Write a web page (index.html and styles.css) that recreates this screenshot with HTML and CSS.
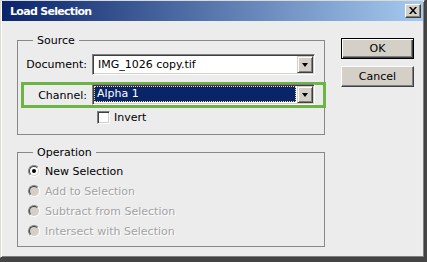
FILE: index.html
```html
<!DOCTYPE html>
<html>
<head>
<meta charset="utf-8">
<link rel="stylesheet" href="styles.css">
</head>
<body>
<div class="window">
  <div class="titlebar">
    <span class="title">Load Selection</span>
    <span class="close"><svg width="8" height="7" viewBox="0 0 8 7"><path d="M0 0h2l2 2.5L6 0h2L5 3.5 8 7H6L4 4.5 2 7H0l3-3.5z" fill="#000"/></svg></span>
  </div>
  <div class="content">
    <div class="groups">
      <fieldset class="group source">
        <legend>Source</legend>
        <div class="row doc">
          <span class="lbl">Document:</span>
          <div class="combo"><span class="val">IMG_1026 copy.tif</span><span class="drop"><span class="arrow"></span></span></div>
        </div>
        <div class="row chan">
          <span class="lbl">Channel:</span>
          <div class="combo"><span class="val selected">Alpha 1</span><span class="drop"><span class="arrow"></span></span></div>
        </div>
        <div class="check-row"><span class="checkbox"></span><span>Invert</span></div>
      </fieldset>
      <fieldset class="group operation">
        <legend>Operation</legend>
        <div class="radio-row"><span class="radio checked"></span><span>New Selection</span></div>
        <div class="radio-row disabled"><span class="radio"></span><span>Add to Selection</span></div>
        <div class="radio-row disabled"><span class="radio"></span><span>Subtract from Selection</span></div>
        <div class="radio-row disabled"><span class="radio"></span><span>Intersect with Selection</span></div>
      </fieldset>
    </div>
    <div class="buttons">
      <button class="btn default">OK</button>
      <button class="btn">Cancel</button>
    </div>
  </div>
</div>
</body>
</html>
```
FILE: styles.css
```css
html, body {
  margin: 0;
  padding: 0;
}
body {
  background: #454545;
  width: 427px;
  height: 262px;
  overflow: hidden;
  font-family: "DejaVu Sans", sans-serif;
  font-size: 11px;
  color: #000;
}
.window {
  box-sizing: border-box;
  width: 425px;
  height: 258px;
  background: #ECECEC;
  border: 1px solid;
  border-color: #DCDAD5 #404040 #404040 #DCDAD5;
  box-shadow: inset 1px 1px #fff, inset -1px -1px #808080;
  padding: 0 1px 1px 1px;
}
.titlebar {
  height: 20px;
  display: flex;
  align-items: center;
  justify-content: space-between;
  background: linear-gradient(to right, #0A246A, #A6CAF0);
  padding: 0 2px 0 8px;
}
.title {
  color: #fff;
  font-weight: bold;
  font-size: 11px;
  letter-spacing: -0.7px;
}
.close {
  box-sizing: border-box;
  width: 16px;
  height: 14px;
  background: #D4D0C8;
  border: 1px solid;
  border-color: #fff #404040 #404040 #fff;
  box-shadow: inset -1px -1px #808080;
  display: flex;
  align-items: center;
  justify-content: center;
  padding: 0 1px 1px 0;
}
.close svg { display: block; }
.content {
  display: flex;
  padding: 13px 0 0 15px;
  gap: 16px;
}
.groups {
  width: 308px;
  display: flex;
  flex-direction: column;
  gap: 11px;
}
.group {
  margin: 0;
  padding: 0;
  border: 1px solid #888;
  min-width: 0;
}
.group legend {
  margin-left: 15px;
  padding: 0 4px;
  line-height: 13px;
}
.source { padding: 7px 0 10px 0; }
.row {
  display: flex;
  align-items: center;
  gap: 5px;
}
.lbl {
  text-align: right;
}
.doc .lbl { width: 69px; }
.chan {
  margin: 7px -2px 0 3px;
  border: 3px solid #6CB444;
  height: 20px;
}
.chan .lbl { width: 63px; }
.combo {
  box-sizing: border-box;
  width: 223px;
  height: 21px;
  background: #fff;
  border: 1px solid;
  border-color: #808080 #fff #fff #808080;
  box-shadow: inset 1px 1px #404040, inset -1px -1px #D4D0C8;
  display: flex;
  padding: 1px;
}
.chan .combo { height: 21px; margin-top: -1px; }
.val {
  flex: 1;
  padding-left: 4px;
  line-height: 17px;
  white-space: nowrap;
}
.val.selected {
  background: #0A246A;
  color: #fff;
  outline: 1px dotted #F2E48A;
  outline-offset: -1px;
  margin: 0 1px 1px 0;
  line-height: 16px;
  padding-left: 3px;
}
.drop {
  box-sizing: border-box;
  width: 16px;
  height: 17px;
  background: #D4D0C8;
  border: 1px solid;
  border-color: #D4D0C8 #404040 #404040 #D4D0C8;
  box-shadow: inset 1px 1px #fff, inset -1px -1px #808080;
  display: flex;
  align-items: center;
  justify-content: center;
}
.arrow {
  width: 0;
  height: 0;
  border-left: 3.5px solid transparent;
  border-right: 3.5px solid transparent;
  border-top: 4px solid #000;
  margin-top: 1px;
}
.check-row {
  display: flex;
  align-items: center;
  gap: 4px;
  margin: 3px 0 0 79px;
  height: 13px;
}
.checkbox {
  box-sizing: border-box;
  width: 13px;
  height: 13px;
  background: #fff;
  border: 1px solid;
  border-color: #808080 #fff #fff #808080;
  box-shadow: inset 1px 1px #404040, inset -1px -1px #D4D0C8;
}
.operation { padding: 2px 0 5px 0; }
.radio-row {
  height: 20px;
  display: flex;
  align-items: center;
  gap: 5px;
  padding-left: 10px;
}
.radio {
  box-sizing: border-box;
  width: 12px;
  height: 12px;
  border-radius: 50%;
  border: 1px solid;
  border-color: #808080 #fff #fff #808080;
  display: flex;
  align-items: center;
  justify-content: center;
}
.radio::before {
  content: "";
  box-sizing: border-box;
  width: 10px;
  height: 10px;
  border-radius: 50%;
  border: 1px solid;
  border-color: #404040 #D4D0C8 #D4D0C8 #404040;
  background: #fff;
}
.radio.checked::after {
  content: "";
  position: absolute;
  width: 4px;
  height: 4px;
  border-radius: 50%;
  background: #000;
}
.radio.checked { position: relative; }
.disabled .radio::before { background: #D4D0C8; }
.disabled span:last-child {
  color: #A3A3A3;
  text-shadow: 1px 1px #fff;
}
.buttons {
  display: flex;
  flex-direction: column;
  gap: 7px;
  margin-top: 4px;
}
.btn {
  box-sizing: border-box;
  width: 73px;
  height: 21px;
  background: #D4D0C8;
  font-family: "DejaVu Sans", sans-serif;
  font-size: 11px;
  color: #000;
  padding: 0;
  border: 1px solid;
  border-color: #fff #404040 #404040 #fff;
  box-shadow: inset -1px -1px #808080;
}
.btn.default {
  border: 1px solid #000;
  box-shadow: inset 1px 1px #fff, inset -1px -1px #404040, inset -2px -2px #808080;
}
```
